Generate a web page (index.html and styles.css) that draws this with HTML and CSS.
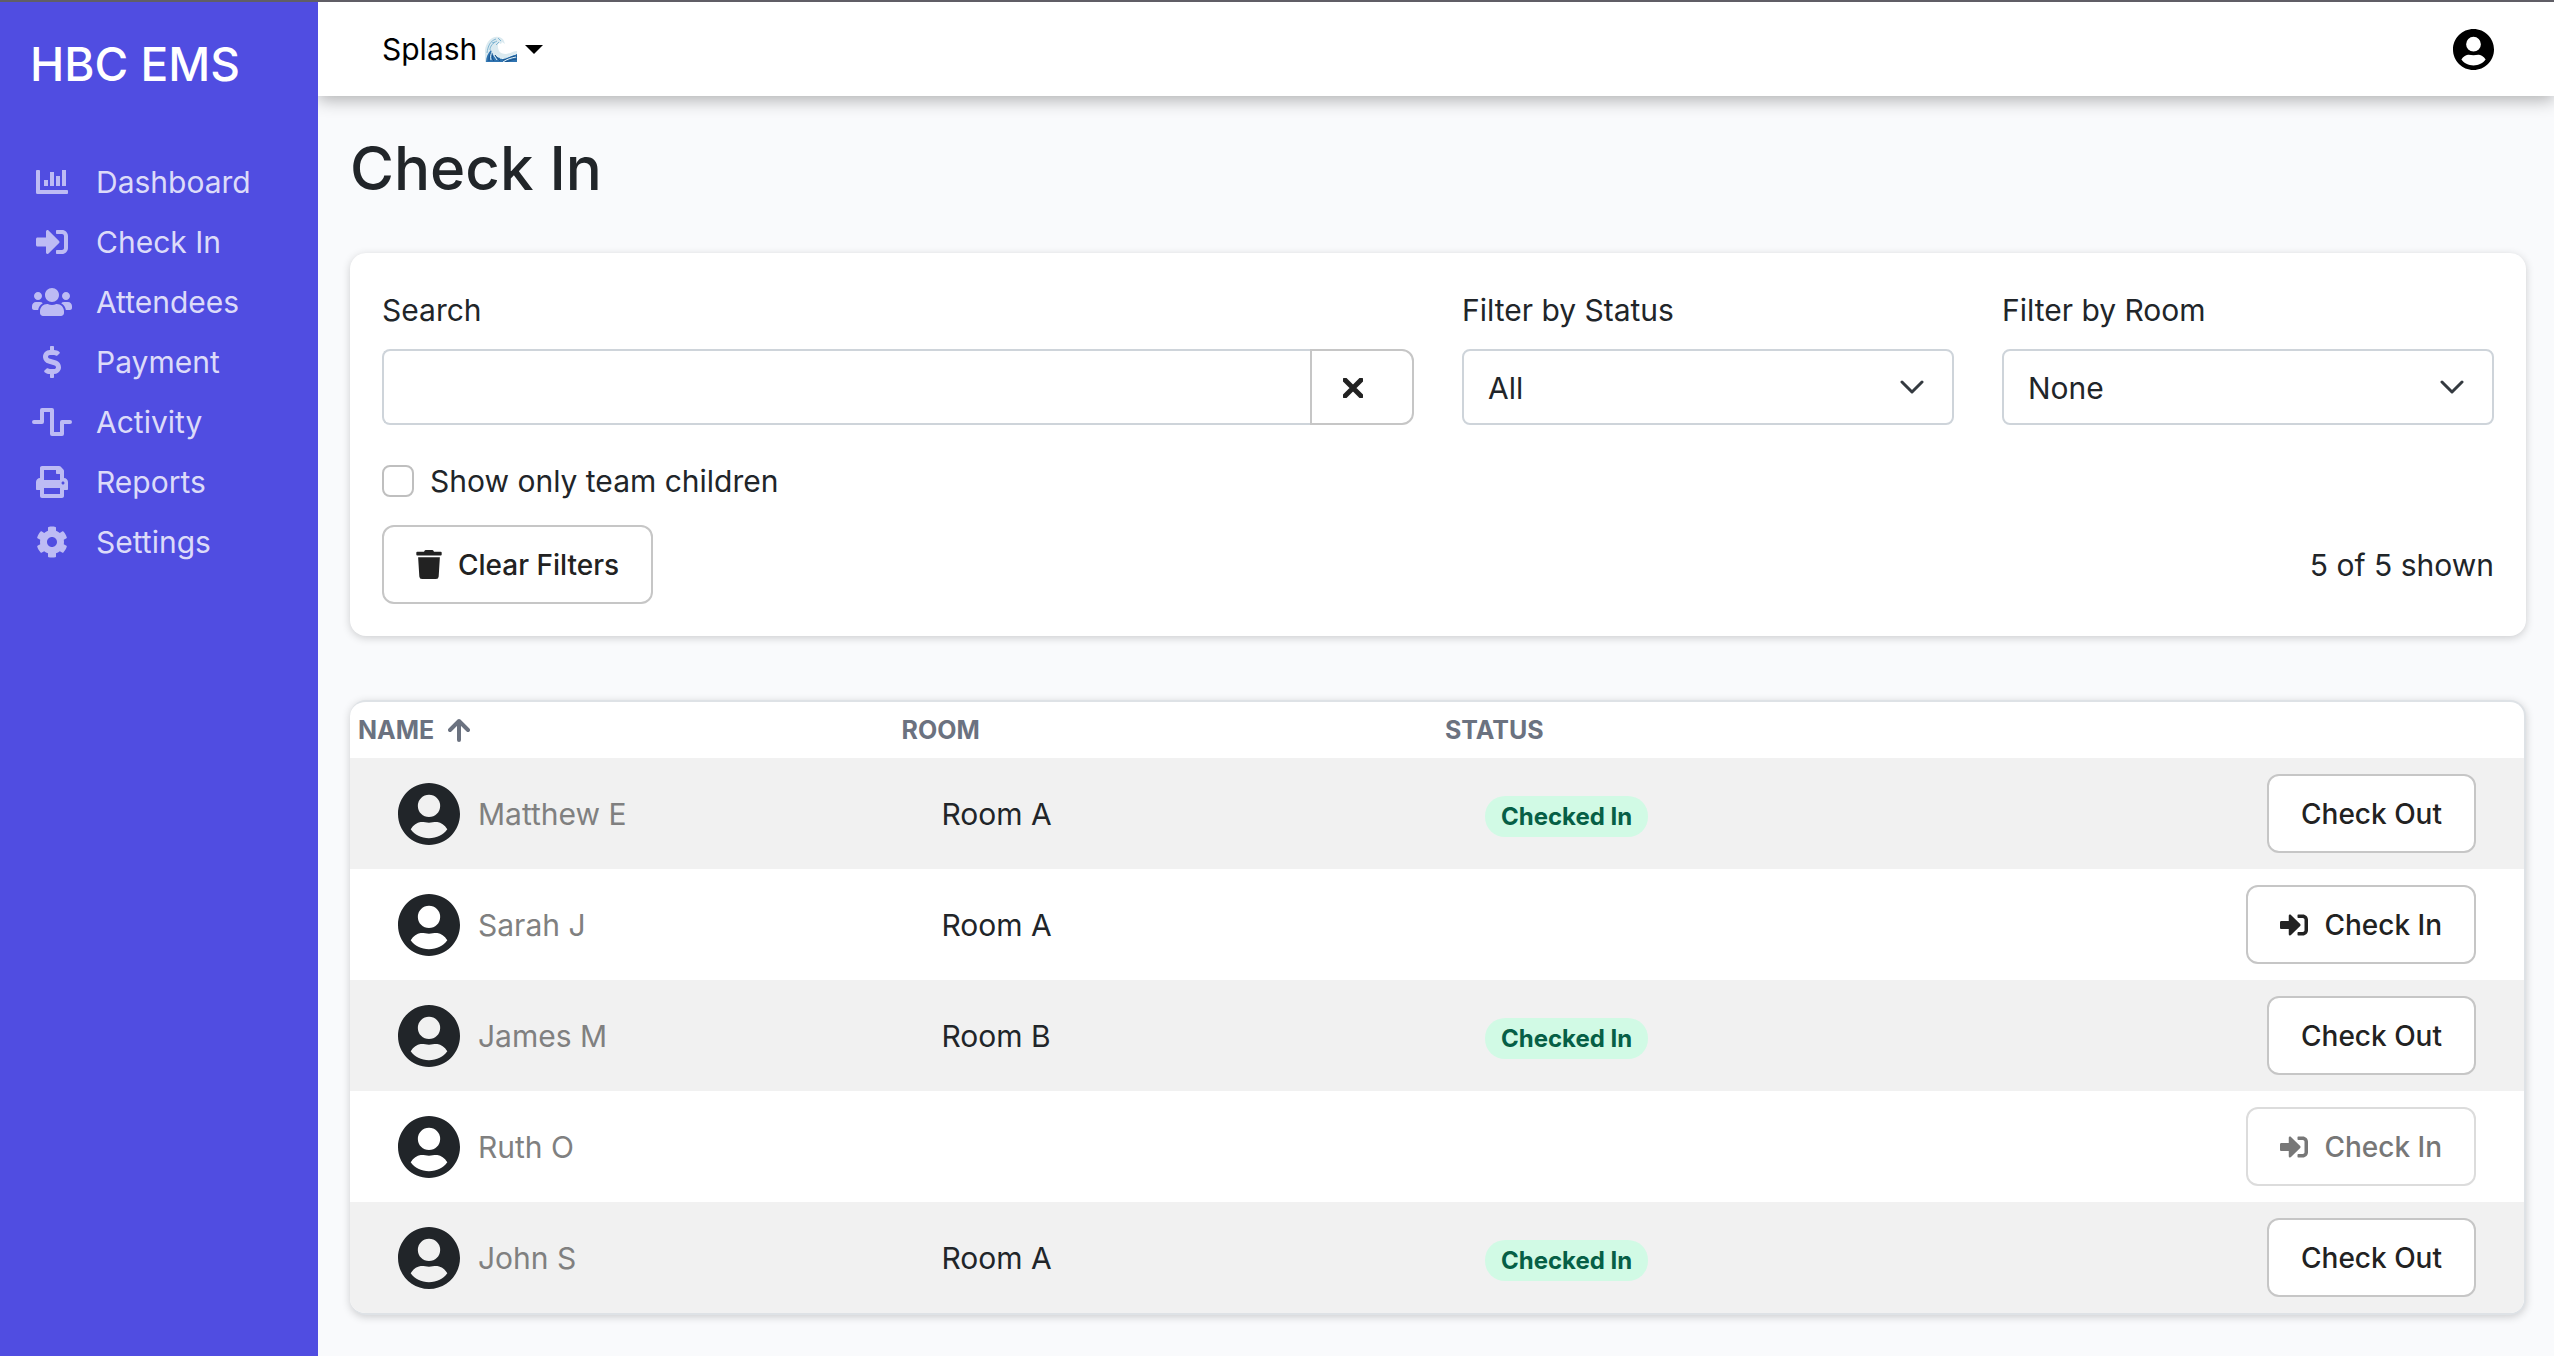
FILE: index.html
```html
<!DOCTYPE html>
<html lang="en">
<head>
<meta charset="utf-8">
<title>Check In - HBC EMS</title>
<link rel="stylesheet" href="styles.css">
</head>
<body>
<svg class="sprite" aria-hidden="true">
  <symbol id="i-chart" viewBox="0 0 40 40"><path d="M4 8.900a.9.900 0 0 1 .9-.9h2.200a.9.900 0 0 1 .9.900V28h27.100a.9.900 0 0 1 .9.900v2.200a.9.900 0 0 1-.9.900H5.500A1.500 1.500 0 0 1 4 30.500zM12 18h4v6h-4zM18 10h4v14h-4zM24 14h4v10h-4zM30 8h4v16h-4z"/></symbol>
  <symbol id="i-login" viewBox="0 0 512 512"><path d="M416 448h-84c-6.600 0-12-5.400-12-12v-40c0-6.600 5.400-12 12-12h84c17.700 0 32-14.300 32-32V160c0-17.700-14.300-32-32-32h-84c-6.600 0-12-5.400-12-12V76c0-6.600 5.400-12 12-12h84c53 0 96 43 96 96v192c0 53-43 96-96 96zm-47-209L201 71c-15-15-41-4.500-41 17v96H24c-13.300 0-24 10.700-24 24v96c0 13.300 10.700 24 24 24h136v96c0 21.500 26 32 41 17l168-168c9.300-9.400 9.300-24.600 0-34z"/></symbol>
  <symbol id="i-users" viewBox="0 0 640 512"><path d="M96 224c35.300 0 64-28.700 64-64s-28.700-64-64-64-64 28.700-64 64 28.700 64 64 64zm448 0c35.300 0 64-28.700 64-64s-28.700-64-64-64-64 28.700-64 64 28.700 64 64 64zm32 32h-64c-17.600 0-33.500 7.100-45.100 18.600 40.300 22.100 68.900 62 75.100 109.400h66c17.700 0 32-14.300 32-32v-32c0-35.300-28.700-64-64-64zm-256 0c61.900 0 112-50.100 112-112S381.900 32 320 32 208 82.100 208 144s50.100 112 112 112zm76.800 32h-8.300c-20.800 10-43.900 16-68.500 16s-47.600-6-68.500-16h-8.300C179.600 288 128 339.600 128 403.200V432c0 26.500 21.500 48 48 48h288c26.500 0 48-21.500 48-48v-28.800c0-63.600-51.600-115.200-115.200-115.200zm-223.700-13.400C161.500 263.100 145.600 256 128 256H64c-35.300 0-64 28.700-64 64v32c0 17.700 14.300 32 32 32h65.900c6.300-47.400 34.900-87.300 75.200-109.400z"/></symbol>
  <symbol id="i-dollar" viewBox="0 0 288 512"><path d="M209.200 233.400l-108-31.600C88.700 198.200 80 186.500 80 173.500c0-16.300 13.200-29.500 29.500-29.500h66.300c12.200 0 24.200 3.700 34.200 10.500 6.100 4.100 14.300 3.100 19.500-2l34.800-34c7.100-6.900 6.100-18.400-1.800-24.500C238 74.800 207.400 64.100 176 64V16c0-8.800-7.200-16-16-16h-32c-8.800 0-16 7.200-16 16v48h-2.500C45.800 64-5.400 118.700.5 183.600c4.200 46.100 39.400 83.600 83.800 96.600l102.500 30c12.500 3.700 21.200 15.300 21.200 28.300 0 16.300-13.200 29.500-29.500 29.500h-66.300C100 368 88 364.300 78 357.500c-6.100-4.100-14.300-3.100-19.500 2l-34.800 34c-7.100 6.900-6.100 18.400 1.800 24.500 24.500 19.200 55.100 29.900 86.500 30v48c0 8.800 7.200 16 16 16h32c8.800 0 16-7.200 16-16v-48.200c46.600-.9 90.300-28.600 105.700-72.700 21.500-61.600-14.600-124.800-72.500-141.700z"/></symbol>
  <symbol id="i-wave" viewBox="0 0 40 32"><path fill="none" stroke="currentColor" stroke-width="4" stroke-linejoin="round" stroke-linecap="round" d="M2 16h8V4h10v24h10V16h8"/></symbol>
  <symbol id="i-print" viewBox="0 0 512 512"><path d="M448 192V77.300c0-8.500-3.400-16.600-9.400-22.600L393.400 9.400c-6-6-14.100-9.400-22.600-9.400H96C78.300 0 64 14.300 64 32v160c-35.300 0-64 28.700-64 64v112c0 8.800 7.200 16 16 16h48v96c0 17.700 14.300 32 32 32h320c17.700 0 32-14.300 32-32v-96h48c8.800 0 16-7.200 16-16V256c0-35.300-28.700-64-64-64zm-64 256H128v-96h256v96zm0-224H128V64h192v48c0 8.800 7.200 16 16 16h48v96zm48 72c-13.300 0-24-10.800-24-24 0-13.300 10.700-24 24-24s24 10.700 24 24c0 13.300-10.700 24-24 24z"/></symbol>
  <symbol id="i-cog" viewBox="0 0 512 512"><path d="M487.400 315.700l-42.600-24.600c4.300-23.200 4.300-47 0-70.200l42.600-24.600c4.900-2.800 7.100-8.600 5.500-14-11.100-35.600-30-67.800-54.700-94.600-3.800-4.100-10-5.100-14.800-2.300L380.800 110c-17.900-15.400-38.500-27.300-60.800-35.100V25.800c0-5.600-3.900-10.500-9.400-11.700-36.700-8.200-74.300-7.800-109.200 0-5.500 1.200-9.400 6.100-9.400 11.700V75c-22.200 7.900-42.800 19.800-60.800 35.100L88.700 85.500c-4.900-2.800-11-1.900-14.800 2.300-24.700 26.700-43.600 58.900-54.700 94.600-1.700 5.400.6 11.200 5.500 14L67.300 221c-4.300 23.200-4.300 47 0 70.200l-42.600 24.600c-4.900 2.800-7.100 8.600-5.500 14 11.100 35.600 30 67.800 54.700 94.600 3.800 4.100 10 5.100 14.800 2.300l42.600-24.600c17.900 15.400 38.500 27.300 60.800 35.100v49.200c0 5.600 3.900 10.500 9.400 11.700 36.700 8.200 74.300 7.800 109.200 0 5.500-1.200 9.400-6.100 9.400-11.700v-49.200c22.200-7.900 42.800-19.800 60.800-35.100l42.600 24.600c4.900 2.800 11 1.900 14.800-2.300 24.700-26.700 43.600-58.900 54.700-94.600 1.500-5.500-.7-11.300-5.600-14.100zM256 336c-44.100 0-80-35.900-80-80s35.900-80 80-80 80 35.900 80 80-35.900 80-80 80z"/></symbol>
  <symbol id="i-trash" viewBox="0 0 448 512"><path d="M432 32H312l-9.400-18.700A24 24 0 0 0 281.100 0H166.800a23.700 23.700 0 0 0-21.400 13.300L136 32H16A16 16 0 0 0 0 48v32a16 16 0 0 0 16 16h416a16 16 0 0 0 16-16V48a16 16 0 0 0-16-16zM53.200 467a48 48 0 0 0 47.900 45h245.800a48 48 0 0 0 47.900-45L416 128H32z"/></symbol>
  <symbol id="i-user" viewBox="2 2 20 20"><path d="M12 2C6.480 2 2 6.480 2 12s4.480 10 10 10 10-4.480 10-10S17.520 2 12 2zm0 3.800a3.600 3.600 0 1 1 0 7.200 3.600 3.600 0 0 1 0-7.200zm0 14c-2.500 0-4.700-1.100-5.900-2.900.9-1.400 2-2.100 3.200-2.300.9-.1 1.700.2 2.700.2s1.800-.3 2.700-.2c1.200.2 2.300.9 3.200 2.300-1.200 1.800-3.400 2.900-5.900 2.900z"/></symbol>
  <symbol id="i-surf" viewBox="0 0 32 26">
    <path fill="#dbeaf0" d="M0 26V14C1 7 5 2 10 1c4-1 8 1 9 4l1 3-3-2-1 2-2-1c-2 2-1 5 0 8 1 2 4 3 7 3 4 0 7-3 11-3v11z"/>
    <path fill="#2f73b0" d="M1 26c0-5 2-9 5-12 1 4 4 7 9 8 7 1 11-3 17-4v8z"/>
    <path fill="none" stroke="#17518a" stroke-width="1" d="M4 25c0-5 1-7 3-9M9 25c-2-2-2-5-1-7M15 25l-5-6M18 24c5 0 8-4 14-4M20 26c5-1 7-3 12-3"/>
    <path fill="none" stroke="#7fb5d3" stroke-width="1" d="M2 17C3 10 5 5 11 3M5 14c0-4 3-7 7-9M7 7l3-1M13 2l3 3M11 9l3-3"/>
    <path fill="none" stroke="#e9f5f8" stroke-width="1" d="M6 24c-1-4 0-6 1-8M12 24l-4-6M18 26c4-3 8-4 13-5M15 22c4 2 8-2 16-4"/>
  </symbol>
</svg>

<div class="app">
  <aside class="sidebar">
    <a class="brand" href="#">HBC EMS</a>
    <nav class="nav">
      <a href="#"><span class="ico"><svg width="40" height="40"><use href="#i-chart"/></svg></span>Dashboard</a>
      <a href="#"><span class="ico"><svg width="32" height="32"><use href="#i-login"/></svg></span>Check In</a>
      <a href="#"><span class="ico"><svg width="40" height="32"><use href="#i-users"/></svg></span>Attendees</a>
      <a href="#"><span class="ico"><svg width="18" height="32"><use href="#i-dollar"/></svg></span>Payment</a>
      <a href="#"><span class="ico"><svg width="40" height="32"><use href="#i-wave"/></svg></span>Activity</a>
      <a href="#"><span class="ico"><svg width="32" height="32"><use href="#i-print"/></svg></span>Reports</a>
      <a href="#"><span class="ico"><svg width="32" height="32"><use href="#i-cog"/></svg></span>Settings</a>
    </nav>
  </aside>

  <div class="content">
    <header class="topbar">
      <button class="event" type="button">Splash <svg class="surf" width="32" height="26" aria-hidden="true"><use href="#i-surf"/></svg><span class="caret"></span></button>
      <button class="account" type="button" aria-label="Account"><svg width="41" height="41"><use href="#i-user"/></svg></button>
    </header>

    <main class="main">
      <h1>Check In</h1>

      <section class="card filters">
        <div class="field field-search">
          <label for="search">Search</label>
          <div class="group">
            <input id="search" type="text">
            <button type="button" aria-label="Clear search"><svg width="20" height="20" viewBox="0 0 20 20"><path d="M2 2l16 16M18 2L2 18" stroke="#222" stroke-width="5" stroke-linecap="round"/></svg></button>
          </div>
        </div>
        <div class="field">
          <label for="status">Filter by Status</label>
          <div class="pick"><select id="status"><option>All</option></select><svg width="24" height="14" viewBox="0 0 24 14"><path d="M2 2l10 10L22 2"/></svg></div>
        </div>
        <div class="field">
          <label for="room">Filter by Room</label>
          <div class="pick"><select id="room"><option>None</option></select><svg width="24" height="14" viewBox="0 0 24 14"><path d="M2 2l10 10L22 2"/></svg></div>
        </div>
        <div class="check"><input id="team" type="checkbox"><label for="team">Show only team children</label></div>
        <div class="actions">
          <button class="btn" type="button"><svg width="26" height="29"><use href="#i-trash"/></svg>Clear Filters</button>
          <span>5 of 5 shown</span>
        </div>
      </section>

      <div class="card list">
        <table>
          <thead>
            <tr><th>NAME <svg width="22" height="24" viewBox="0 0 22 24"><path d="M11 22V3M2 12l9-9 9 9"/></svg></th><th>ROOM</th><th>STATUS</th><th></th></tr>
          </thead>
          <tbody>
            <tr>
              <td><div class="person"><svg width="62" height="62"><use href="#i-user"/></svg><a href="#">Matthew E</a></div></td><td>Room A</td><td><span class="badge">Checked In</span></td>
              <td><button class="btn" type="button">Check Out</button></td>
            </tr>
            <tr>
              <td><div class="person"><svg width="62" height="62"><use href="#i-user"/></svg><a href="#">Sarah J</a></div></td><td>Room A</td><td></td>
              <td><button class="btn" type="button"><svg width="28" height="28"><use href="#i-login"/></svg>Check In</button></td>
            </tr>
            <tr>
              <td><div class="person"><svg width="62" height="62"><use href="#i-user"/></svg><a href="#">James M</a></div></td><td>Room B</td><td><span class="badge">Checked In</span></td>
              <td><button class="btn" type="button">Check Out</button></td>
            </tr>
            <tr>
              <td><div class="person"><svg width="62" height="62"><use href="#i-user"/></svg><a href="#">Ruth O</a></div></td><td></td><td></td>
              <td><button class="btn" type="button" disabled><svg width="28" height="28"><use href="#i-login"/></svg>Check In</button></td>
            </tr>
            <tr>
              <td><div class="person"><svg width="62" height="62"><use href="#i-user"/></svg><a href="#">John S</a></div></td><td>Room A</td><td><span class="badge">Checked In</span></td>
              <td><button class="btn" type="button">Check Out</button></td>
            </tr>
          </tbody>
        </table>
      </div>
    </main>
  </div>
</div>
</body>
</html>
```
FILE: styles.css
```css
*, *::before, *::after { box-sizing: border-box; }

body {
  margin: 0;
  font: 400 30px/48px Inter, "Liberation Sans", sans-serif;
  color: #212529;
  background: #f9fafc;
}

button, input, select { font: inherit; color: inherit; }
a { color: inherit; text-decoration: none; }
svg { fill: currentColor; flex: none; }
.sprite { display: none; }

.app {
  display: flex;
  min-height: 100vh;
  border-top: 2px solid #605e66;
}

/* Sidebar */
.sidebar {
  flex: none;
  width: 318px;
  background: #504de1;
}
.brand {
  display: block;
  padding: 30px 30px 56px;
  font-size: 46px;
  line-height: 64px;
  font-weight: 500;
  color: #fff;
}
.nav { display: flex; flex-direction: column; }
.nav a {
  display: flex;
  align-items: center;
  gap: 24px;
  height: 60px;
  padding: 0 32px;
  color: #dcdbf9;
}
.ico {
  display: flex;
  justify-content: center;
  width: 40px;
  color: #bdbbf4;
}

/* Top bar */
.content { flex: 1; min-width: 0; }
.topbar {
  display: flex;
  align-items: center;
  justify-content: space-between;
  height: 94px;
  padding: 0 60px 0 64px;
  background: #fff;
  color: #000;
  box-shadow: 0 4px 16px rgba(0, 0, 0, .3);
  clip-path: inset(0 0 -32px 0);
}
.event, .account {
  display: flex;
  align-items: center;
  padding: 0;
  border: 0;
  background: none;
}
.surf { margin: 0 8px; }
.caret {
  border: 9px solid transparent;
  border-top-color: #000;
  border-bottom: 0;
}

/* Page */
.main { padding: 32px 28px 40px 32px; }
h1 {
  margin: 0 0 45px;
  font-size: 60px;
  line-height: 80px;
  font-weight: 500;
}
.card {
  background: #fff;
  border-radius: 16px;
  box-shadow: 0 2px 8px rgba(0, 0, 0, .18);
}

/* Filters */
.filters {
  display: grid;
  grid-template-columns: repeat(12, 1fr);
  column-gap: 48px;
  padding: 33px 32px 32px;
}
.field { grid-column: span 3; }
.field-search { grid-column: span 6; }
.field label { display: block; margin-bottom: 15px; }
.group { display: flex; }
.group input, .pick select {
  width: 100%;
  min-width: 0;
  height: 76px;
  padding: 2px 24px 0;
  border: 2px solid #ced4da;
  border-radius: 8px;
  background: #fff;
  appearance: none;
}
.group input { border-right: 0; border-radius: 8px 0 0 8px; }
.group button {
  flex: none;
  width: 104px;
  padding: 0 18px 0 0;
  border: 2px solid #c6c6c6;
  border-radius: 0 12px 12px 0;
  background: #fff;
}
.pick { display: grid; align-items: center; }
.pick > * { grid-area: 1 / 1; }
.pick svg {
  justify-self: end;
  margin-right: 30px;
  fill: none;
  stroke: #343a40;
  stroke-width: 3;
  stroke-linecap: round;
  stroke-linejoin: round;
  pointer-events: none;
}
.check {
  grid-column: 1 / -1;
  display: flex;
  align-items: center;
  gap: 16px;
  margin: 32px 0 20px;
}
.check input {
  width: 32px;
  height: 32px;
  margin: 0;
  border: 2px solid #bfbfbf;
  border-radius: 8px;
  background: #fff;
  appearance: none;
}
.actions {
  grid-column: 1 / -1;
  display: flex;
  align-items: center;
  justify-content: space-between;
}
.btn {
  display: inline-flex;
  align-items: center;
  gap: 16px;
  height: 79px;
  padding: 0 32px;
  border: 2px solid #c6c6c6;
  border-radius: 12px;
  background: #fff;
  color: #222;
  font-size: 28px;
  font-weight: 500;
  white-space: nowrap;
}
.btn:disabled { color: #777; border-color: #dcdcdc; }

/* Attendee list */
.list {
  margin-top: 64px;
  border: 2px solid #dee2e6;
  border-left: 0;
  overflow: hidden;
}
table { width: 100%; table-layout: fixed; border-collapse: collapse; }
th {
  height: 56px;
  padding: 0 8px;
  font-size: 25px;
  line-height: 40px;
  font-weight: 700;
  text-align: left;
  color: #6b7280;
}
th svg {
  margin-left: 8px;
  vertical-align: -3px;
  fill: none;
  stroke: currentColor;
  stroke-width: 4;
  stroke-linecap: round;
  stroke-linejoin: round;
}
td { height: 111px; padding: 0 48px; }
tbody tr:nth-child(odd) { background: #f1f1f1; }
td:last-child { text-align: right; }
td .btn { vertical-align: middle; }
.person { display: flex; align-items: center; gap: 18px; }
.person a { color: #808080; }
.badge {
  display: inline-block;
  padding: 0 16px;
  border-radius: 20px;
  background: #d1fae5;
  color: #065f46;
  font-size: 24px;
  line-height: 41px;
  font-weight: 700;
}
```
